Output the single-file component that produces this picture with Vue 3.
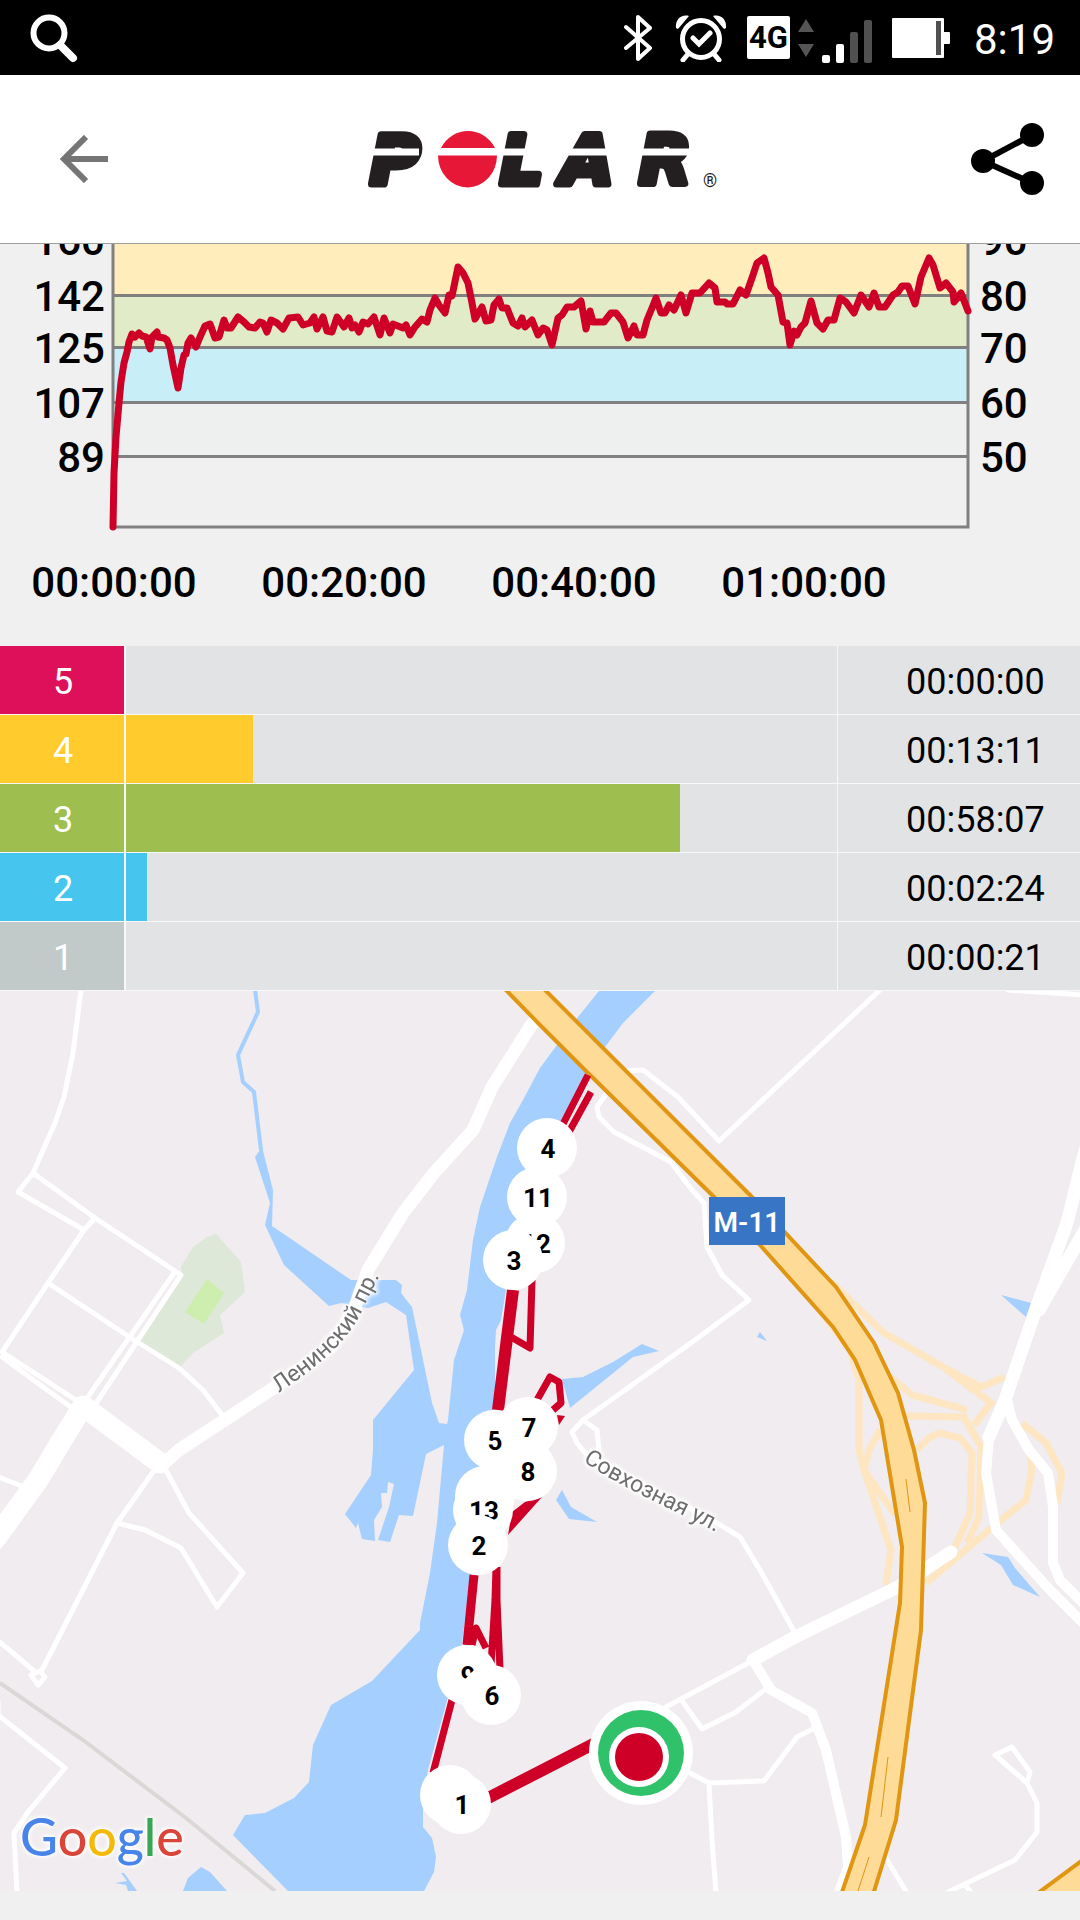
<template>
  <div class="screen">
    <div class="status-bar">
      <svg class="status-search" viewBox="0 0 50 50" aria-hidden="true">
        <circle cx="20" cy="20" r="15.5" />
        <path d="M31 32 44 45" />
      </svg>
      <div class="status-icons">
        <svg class="bluetooth" viewBox="0 0 30 48" aria-hidden="true">
          <path d="M2 13 26 34 14 45V3L26 14 2 34" />
        </svg>
        <svg class="alarm" viewBox="0 0 53 48" aria-hidden="true">
          <circle cx="27" cy="25" r="18.5" />
          <path d="M19 24 25 30 36 19M14 40 9 46M40 40 45 46" />
          <path class="bell" d="M2 14C1 6 7 0 15 2L4 15ZM52 14C53 6 47 0 39 2L50 15Z" />
        </svg>
        <div class="network">
          <span class="network-type">4G</span>
          <svg class="data-arrows" viewBox="0 0 16 38" aria-hidden="true">
            <path d="M8 0 16 13H0ZM8 38 16 25H0Z" />
          </svg>
          <svg class="signal" viewBox="0 0 50 43" aria-hidden="true">
            <rect x="0" y="35" width="8" height="8" rx="2" />
            <rect x="14" y="24" width="8" height="19" rx="2" />
            <rect class="dim" x="28" y="12" width="8" height="31" rx="2" />
            <rect class="dim" x="42" y="0" width="8" height="43" rx="2" />
          </svg>
        </div>
        <svg class="battery" viewBox="0 0 58 40" aria-hidden="true">
          <rect width="52" height="40" rx="1" />
          <rect x="50" y="14" width="8" height="12" rx="1" />
          <rect class="dim" x="44" y="3" width="5" height="34" />
        </svg>
        <span class="clock">8:19</span>
      </div>
    </div>

    <header class="app-bar">
      <button class="icon-btn" type="button" aria-label="Back">
        <svg class="back-icon" viewBox="0 0 48 48" aria-hidden="true">
          <path d="M48 24H6M26 2 4 24 26 46" />
        </svg>
      </button>
      <svg class="logo" viewBox="356 122 370 72" role="img" aria-label="Polar">
        <text class="logo-text" x="371 501 562 640" y="183">PLAR</text>
        <path class="logo-gap" d="M366 151H420M496 151H628M632 151H690" />
        <path class="logo-dot" d="M442 147A30 30 0 0 1 496 147ZM439 154.500H498A29.500 32 0 0 1 439 154.500Z" />
        <text class="logo-mark" x="704" y="186">®</text>
      </svg>
      <button class="icon-btn icon-btn--end" type="button" aria-label="Share">
        <svg class="share-icon" viewBox="0 0 73 73" aria-hidden="true">
          <path d="M61 12 12 38 61 60" />
          <circle cx="61" cy="12" r="12" />
          <circle cx="12" cy="38" r="12" />
          <circle cx="61" cy="60" r="12" />
        </svg>
      </button>
    </header>

    <main>
      <svg class="chart" viewBox="0 244 1080 402" role="img" aria-label="Heart rate">
        <rect v-for="b in bands" :key="b.y" x="113" :y="b.y" width="855" :height="b.h" :fill="b.color" />
        <path class="grid" d="M113 240V527H968V240M113 295.500H968M113 347.500H968M113 402.500H968M113 456.500H968" />
        <polyline class="pulse" :points="pulse" />
        <g class="axis">
          <template v-for="t in ticks" :key="t.bpm">
            <text x="105" :y="t.y" text-anchor="end">{{ t.bpm }}</text>
            <text x="980" :y="t.y">{{ t.percent }}</text>
          </template>
          <text v-for="(t, i) in times" :key="t" :x="114 + i * 230" y="597" text-anchor="middle">{{ t }}</text>
        </g>
      </svg>

      <table class="zones">
        <tbody>
          <tr v-for="z in zones" :key="z.id">
            <th scope="row" :class="'zone-' + z.id">{{ z.id }}</th>
            <td class="zone-track">
              <div class="zone-bar" :class="'zone-' + z.id" :style="{ width: z.share + '%' }"></div>
            </td>
            <td class="zone-time">{{ z.time }}</td>
          </tr>
        </tbody>
      </table>

      <svg class="map" viewBox="0 991 1080 900" role="img" aria-label="Route map">
        <rect class="land" y="991" width="1080" height="900" />

        <path class="park" d="M216 1234 207 1237 193 1247 181 1267 182 1275 138 1343 179 1368 193 1353 224 1333 220 1315 245 1292 241 1262Z" />
        <path class="lawn" d="M207 1279 224 1293 204 1324 185 1312Z" />

        <!-- river with its western creek -->
        <path class="water" d="M599 991 574 1022 540 1068 523 1100 510 1123 497 1157 480 1207 473 1240 467 1290 460 1315 464 1330 454 1360 448 1420 447 1424 439 1423 432 1403 412 1307 401 1293 402 1285 396 1280 351 1280 272 1226 273 1190 262 1147 255 1157 270 1203 265 1225 284 1265 329 1306 341 1303 368 1308 386 1302 406 1315 414 1370 373 1420 373 1450 371 1475 345 1514 356 1528 358 1523 362 1539 375 1541 374 1520 382 1507 381 1493 387 1493 388 1482 394 1484 389 1507 378 1540 390 1542 399 1515 413 1516 426 1454 444 1445 437 1523 430 1573 420 1623 420 1630 372 1681 331 1705 313 1745 309 1782 294 1798 265 1813 245 1815 233 1835 288 1891H424L434 1872 436 1857 432 1838 423 1827 423 1807 428 1770 448 1697 462 1643 471 1573 495 1407 495 1347 496 1330 501 1320 506 1290 530 1190 562 1122 587 1073 605 1047 623 1023 655 991Z" />
        <path class="stream" d="M255 990 258 1012 238 1055 243 1082 254 1092 261 1150" />
        <path class="water" d="M562 1379 583 1377 613 1362 642 1344 659 1351 633 1357 570 1408ZM757 1337 760 1332 767 1341ZM1001 1295 1031 1303 1026 1317ZM556 1500 562 1490 571 1507 597 1522 569 1519ZM183 1891 188 1878 201 1867 210 1872 227 1891ZM115 1883 127 1881 121 1873 124 1873 132 1884 137 1891H128L126 1885Z" />
        <path class="water" d="M982 1553 1008 1557 1015 1568 1040 1597 1013 1585 1001 1565Z" />

        <path class="rail" d="M0 1683 83 1740 186 1818 275 1891" />

        <g class="ramp">
          <path d="M832 1283 884 1333 943 1367 981 1387 1005 1377M943 1367 991 1403 974 1425" />
          <path d="M889 1376 912 1395 967 1410M905 1416 964 1417 981 1447 979 1517 967 1543" />
          <path d="M917 1450 929 1438 939 1433 960 1438 972 1453 970 1513 955 1547" />
          <path d="M815 1303 850 1350 859 1380V1450L864 1470 891 1550 886 1585M864 1470 895 1515M880 1430 869 1450 864 1470" />
          <path d="M1022 1423 1046 1443 1062 1473 1057 1503M1029 1447 1032 1470 1026 1500 1001 1520 926 1583" />
        </g>

        <g class="road">
          <path v-for="d in streets" :key="d" :d="d" />
          <path class="mid" d="M753 1660 771 1690 812 1713 826 1750 846 1837 848 1867 838 1895" />
          <path class="mid" d="M989 1437 986 1473 996 1530 1050 1590 1085 1625M1007 1400 1012 1420 1029 1450 1048 1473 1053 1507V1563L1060 1580 1085 1605" />
          <path class="main" d="M753 1660 795 1637 898 1587 951 1552" />
          <path class="main" d="M545 1007 530 1027 492 1087 473 1130 434 1173 403 1213 368 1270 355 1307 331 1347 275 1387 179 1450 162 1465" />
          <path class="main" d="M1085 1150 1067 1223 1039 1300 1005 1400 989 1437M1085 1230 1062 1270 1039 1310" />
          <path class="wide" d="M-4 1538 38 1480 62 1440 83 1406 160 1463" />
        </g>

        <g class="motorway">
          <path d="M502 986 540 1025 588 1073 712 1195 760 1245 833 1327 855 1360 881 1420 886 1450 902 1547 900 1603 865 1825 840 1898H872L896 1820 921 1630 925 1503 914 1450 898 1393 874 1343 836 1287 750 1195 541 986Z" />
          <path d="M1084 1859 1034 1896H1084Z" />
          <path class="seam" d="M906 1479 910 1512M888 1757 881 1817M869 1857 858 1891" />
        </g>
        <rect class="shield" x="709" y="1197" width="76" height="48" />
        <text class="shield-text" x="747" y="1232">M-11</text>

        <path id="leninsky" class="guide" d="M279 1393C318 1366 347 1343 362 1311S380 1276 392 1252" />
        <text class="street"><textPath href="#leninsky">Ленинский пр.</textPath></text>
        <path id="sovkhoz" class="guide" d="M583 1461C620 1488 680 1512 735 1542" />
        <text class="street"><textPath href="#sovkhoz">Совхозная ул.</textPath></text>

        <g class="track">
          <path class="bold" d="M640 1720 461 1812M498 1410 513 1290" />
          <path class="double" d="M467 1645 474 1575" />
          <path d="M433 1773 452 1700M511 1337 530 1348 532 1280M563 1124 588 1075M569 1132 591 1092" />
          <path d="M537 1400 550 1377 559 1382 561 1403 553 1410M496 1567 495 1600 491 1665M497 1567 497 1600 500 1670M472 1645 476 1628 486 1648" />
          <path class="patch" d="M557 1415 565 1416 559 1425ZM512 1512 525 1502 542 1497 508 1535Z" />
        </g>

        <g v-for="(m, i) in markers" :key="i" class="marker">
          <circle :cx="m.x" :cy="m.y" r="30" />
          <text v-if="m.km" :x="m.x + 1" :y="m.y + 10">{{ m.km }}</text>
        </g>

        <circle cx="641" cy="1753" r="52" fill="#fff" />
        <circle cx="641" cy="1753" r="43" fill="#30c26a" />
        <circle cx="639" cy="1757" r="30" fill="#fff" />
        <circle cx="639" cy="1757" r="24" fill="#ce0028" />

        <text class="google" x="20" y="1856"><tspan fill="#4884ea">G</tspan><tspan fill="#da4539">o</tspan><tspan fill="#f3ba0c">o</tspan><tspan fill="#4884ea">g</tspan><tspan fill="#37a753">l</tspan><tspan fill="#da4539">e</tspan></text>
      </svg>
    </main>
  </div>
</template>

<script setup>
const bands = [
  { y: 240, h: 56, color: '#ffeebb' },
  { y: 296, h: 52, color: '#e2ebc8' },
  { y: 348, h: 55, color: '#c8eff7' },
  { y: 403, h: 54, color: '#eeefef' },
  { y: 457, h: 70, color: '#f0f0f0' },
]

const ticks = [
  { bpm: 160, percent: 90, y: 255 },
  { bpm: 142, percent: 80, y: 311 },
  { bpm: 125, percent: 70, y: 363 },
  { bpm: 107, percent: 60, y: 418 },
  { bpm: 89, percent: 50, y: 472 },
]

const times = ['00:00:00', '00:20:00', '00:40:00', '01:00:00']

const pulse = `113,527 114,473 116,437 119,403 121,382 124,363 127,352 129,342 132,334 135,337 139,333 142,336
  146,337 150,349 152,337 157,332 158,337 164,338 167,340 170,348 173,365 178,388 181,368 184,355 186,354 188,343
  191,338 196,347 200,337 205,326 210,324 215,338 219,337 224,320 227,328 231,328 238,317 244,322 249,327 255,328
  260,322 263,323 267,332 271,320 277,323 283,329 289,318 298,317 303,325 310,323 314,317 317,329 323,317 327,331
  332,332 337,317 344,327 349,318 352,328 355,325 359,332 363,322 368,324 374,317 380,335 384,318 390,333 393,324
  403,328 406,325 410,335 415,327 422,319 427,322 430,310 435,298 439,305 445,313 449,295 452,296 458,267 463,273
  468,283 472,303 475,319 482,307 486,321 491,320 494,305 499,299 502,308 507,308 513,323 518,326 522,318 525,327
  532,320 538,335 543,328 547,330 552,345 558,318 562,315 567,307 574,307 581,301 586,329 590,311 593,322 604,322
  611,313 616,313 623,322 628,338 634,326 637,335 643,335 647,320 652,308 656,298 661,313 665,313 669,305 674,310
  681,295 686,313 692,293 700,293 709,283 715,288 717,302 725,302 727,304 733,304 740,290 746,295 752,278 757,263
  764,258 768,273 771,287 778,295 783,322 787,323 790,345 794,331 797,335 801,327 805,323 811,301 817,323 823,329
  828,320 834,320 840,298 846,302 854,313 861,295 869,307 874,293 879,307 885,307 893,295 898,292 902,286 908,286
  915,304 921,277 929,258 933,265 940,288 946,283 953,292 954,302 961,293 968,311`

const zones = [
  { id: 5, time: '00:00:00', share: 0 },
  { id: 4, time: '00:13:11', share: 17.8 },
  { id: 3, time: '00:58:07', share: 77.9 },
  { id: 2, time: '00:02:24', share: 2.9 },
  { id: 1, time: '00:00:21', share: 0 },
]

const streets = [
  'M81 990 73 1053 64 1097 55 1123 33 1173 18 1192 84 1230',
  'M33 1173 95 1218 181 1275 93 1408M174 1273 83 1404',
  'M95 1218 84 1230 48 1283 2 1352 79 1402M2 1357 72 1408',
  'M48 1283 131 1338 179 1368 203 1390 222 1415',
  'M-4 1552 14 1520M-4 1476 24 1487M153 1472 117 1523 41 1672',
  'M38 1685 31 1675 40 1671 45 1677ZM-4 1639 33 1670',
  'M117 1523 145 1530 181 1548 217 1607 243 1573 189 1513 167 1472',
  'M-2 1702V1715L65 1768 28 1812 14 1833 17 1893',
  'M626 1071 643 1070 678 1097 719 1141 881 989',
  'M606 1094 597 1107 599 1117 614 1132 671 1162 692 1190 704 1203 707 1247 722 1275 749 1300 695 1340 583 1420 572 1432 577 1443 585 1453 712 1520 740 1537 760 1570 795 1633',
  'M583 1420 597 1430 599 1450M1008 990 1084 995',
  'M666 1707 750 1662M683 1702 702 1729 736 1712 767 1688',
  'M690 1773 709 1783 764 1781 797 1737 815 1728M709 1783 712 1840 716 1893',
  'M946 1893 1015 1860 1037 1832V1803L1027 1783 1030 1772 1012 1747 995 1755 1027 1783',
  'M965 1885 972 1893M886 1858 907 1893',
]

// later entries cover earlier ones
const markers = [
  { km: 4, x: 547, y: 1148 },
  { km: 12, x: 535, y: 1243 },
  { km: 11, x: 537, y: 1197 },
  { km: 3, x: 513, y: 1260 },
  { x: 485, y: 1496 },
  { km: 5, x: 494, y: 1440 },
  { km: 13, x: 483, y: 1510 },
  { km: 8, x: 527, y: 1471 },
  { km: 7, x: 528, y: 1427 },
  { km: 2, x: 478, y: 1545 },
  { km: 9, x: 467, y: 1675 },
  { km: 6, x: 491, y: 1695 },
  { x: 450, y: 1795 },
  { km: 1, x: 461, y: 1804 },
]
</script>

<style>
body {
  background: #f0f0f0;
}
</style>

<style scoped>
.screen {
  min-height: 100vh;
  background: #f0f0f0;
  color: #000;
  font-family: Roboto, "Noto Sans", sans-serif;
}

/* status bar */
.status-bar {
  display: flex;
  align-items: center;
  justify-content: space-between;
  height: 75px;
  padding: 0 25px 0 29px;
  background: #000;
  color: #fff;
}
.status-search {
  width: 50px;
  height: 50px;
  fill: none;
  stroke: #fff;
  stroke-width: 6;
  stroke-linecap: round;
}
.status-search path { stroke-width: 8; }
.status-icons {
  display: flex;
  align-items: center;
  gap: 20px;
}
.bluetooth {
  width: 30px;
  height: 48px;
  fill: none;
  stroke: #fff;
  stroke-width: 4;
  stroke-linecap: round;
  stroke-linejoin: round;
}
.alarm {
  width: 53px;
  height: 48px;
  fill: none;
  stroke: #fff;
  stroke-width: 5;
  stroke-linecap: round;
}
.alarm .bell { fill: #fff; stroke: none; }
.network {
  display: flex;
  align-items: center;
  gap: 8px;
}
.network-type {
  width: 43px;
  height: 43px;
  border-radius: 2px;
  background: #fff;
  color: #000;
  font-size: 31px;
  font-weight: 700;
  line-height: 43px;
  text-align: center;
}
.data-arrows { width: 16px; height: 38px; fill: #555; }
.signal { width: 50px; height: 43px; margin-top: 8px; fill: #fff; }
.battery { width: 58px; height: 40px; fill: #fff; }
.dim { fill: #505050; }
.clock {
  padding: 4px 0 0 4px;
  font-size: 42px;
  line-height: 48px;
}

/* app bar */
.app-bar {
  display: grid;
  grid-template-columns: 1fr auto 1fr;
  align-items: center;
  height: 168px;
  padding: 0 36px 0 60px;
  border-bottom: 1px solid #9e9e9e;
  background: #fff;
}
.icon-btn {
  display: flex;
  justify-self: start;
  padding: 0;
  border: 0;
  background: none;
  cursor: pointer;
}
.icon-btn--end { justify-self: end; }
.back-icon {
  width: 48px;
  height: 48px;
  fill: none;
  stroke: #757575;
  stroke-width: 6;
}
.share-icon {
  width: 73px;
  height: 73px;
  overflow: visible;
}
.share-icon path { fill: none; stroke: #000; stroke-width: 6; }
.logo {
  width: 370px;
  height: 72px;
  margin-right: 24px;
}
.logo-text {
  font-family: "DejaVu Sans", sans-serif;
  font-size: 68px;
  font-weight: 700;
  font-style: oblique;
  fill: #231f20;
  stroke: #231f20;
  stroke-width: 7;
  stroke-linejoin: round;
}
.logo-gap { stroke: #fff; stroke-width: 7; }
.logo-dot { fill: #e61737; }
.logo-mark { font-size: 18px; fill: #231f20; }

/* heart rate chart */
.chart {
  display: block;
  width: 100%;
  height: auto;
}
.grid { fill: none; stroke: #808080; stroke-width: 3; }
.pulse {
  fill: none;
  stroke: #ce0028;
  stroke-width: 7;
  stroke-linecap: round;
  stroke-linejoin: round;
}
.axis { font-size: 42px; font-weight: 500; }

/* time in zones */
.zones {
  width: 100%;
  table-layout: fixed;
  border-collapse: separate;
  border-spacing: 0;
  font-size: 36px;
  line-height: 42px;
}
.zones th,
.zones td {
  height: 64px;
  padding: 4px 0 0;
  border-bottom: 1px solid #f8f8f8;
  font-weight: 400;
}
.zones th {
  width: 122px;
  padding-left: 2px;
  border-right: 2px solid #f8f8f8;
  color: #fff;
}
.zones td { background: #e2e3e5; }
.zones .zone-track { padding: 0; }
.zone-bar { height: 68px; }
.zones .zone-time {
  width: 174px;
  padding-left: 68px;
  border-left: 1px solid #f8f8f8;
}
.zone-5 { background: #df105a; }
.zone-4 { background: #ffcb2d; }
.zone-3 { background: #9ebe4f; }
.zone-2 { background: #46c6ee; }
.zone-1 { background: #c1cac9; }

/* map */
.map {
  display: block;
  width: 100%;
  height: auto;
}
.land { fill: #f0ecef; }
.park { fill: #dde8d8; }
.lawn { fill: #cdeeae; }
.water { fill: #a5cfff; }
.stream { fill: none; stroke: #a5cfff; stroke-width: 4; }
.rail { fill: none; stroke: #d9d8d6; stroke-width: 4; }
.ramp { fill: none; stroke: #fee6c2; stroke-width: 7; }
.road {
  fill: none;
  stroke: #fff;
  stroke-width: 5;
  stroke-linejoin: round;
  stroke-linecap: round;
}
.road .mid { stroke-width: 10; }
.road .main { stroke-width: 13; }
.road .wide { stroke-width: 21; }
.motorway { fill: #fedb97; stroke: #e09612; stroke-width: 4; }
.motorway .seam { fill: none; stroke-width: 1; }
.shield { fill: #3875c5; }
.shield-text {
  fill: #fff;
  font-size: 28px;
  font-weight: 600;
  text-anchor: middle;
}
.guide { fill: none; }
.street {
  fill: #6e6e6e;
  font-size: 23px;
  filter: drop-shadow(0 0 2px #fff) drop-shadow(0 0 2px #fff) drop-shadow(0 0 1px #fff);
}
.track { fill: none; stroke: #ce0028; stroke-width: 7; stroke-linejoin: round; }
.track .bold { stroke-width: 12; }
.track .double { stroke-width: 9; }
.track .patch { fill: #ce0028; stroke: none; }
.marker circle { fill: #fff; }
.marker text {
  font-size: 26px;
  font-weight: 700;
  text-anchor: middle;
}
.google {
  font-family: Lato, sans-serif;
  font-size: 52px;
  font-weight: 500;
  filter: drop-shadow(0 0 2px #fff) drop-shadow(0 0 2px #fff);
}
</style>
